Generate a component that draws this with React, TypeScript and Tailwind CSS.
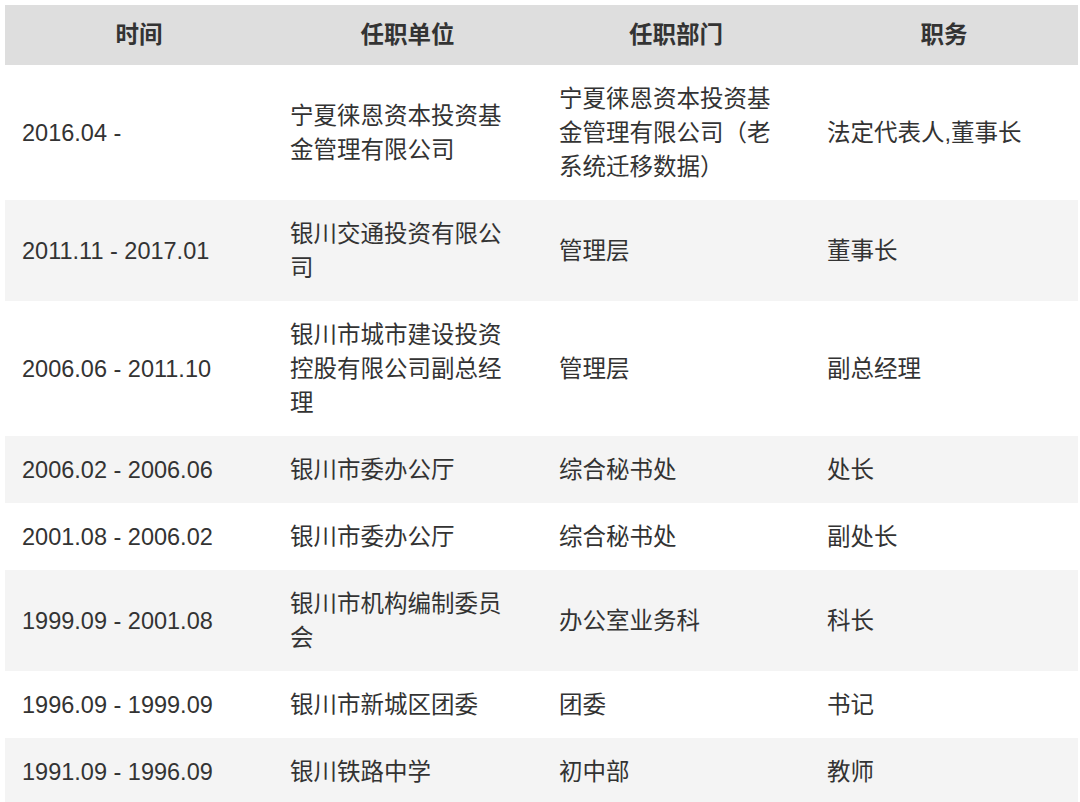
import React from "react";

type Row = { time: string; unit: string[]; dept: string[]; title: string };

const rows: Row[] = [
  {
    time: "2016.04 -",
    unit: ["宁夏徕恩资本投资基", "金管理有限公司"],
    dept: ["宁夏徕恩资本投资基", "金管理有限公司（老", "系统迁移数据）"],
    title: "法定代表人,董事长",
  },
  { time: "2011.11 - 2017.01", unit: ["银川交通投资有限公", "司"], dept: ["管理层"], title: "董事长" },
  {
    time: "2006.06 - 2011.10",
    unit: ["银川市城市建设投资", "控股有限公司副总经", "理"],
    dept: ["管理层"],
    title: "副总经理",
  },
  { time: "2006.02 - 2006.06", unit: ["银川市委办公厅"], dept: ["综合秘书处"], title: "处长" },
  { time: "2001.08 - 2006.02", unit: ["银川市委办公厅"], dept: ["综合秘书处"], title: "副处长" },
  { time: "1999.09 - 2001.08", unit: ["银川市机构编制委员", "会"], dept: ["办公室业务科"], title: "科长" },
  { time: "1996.09 - 1999.09", unit: ["银川市新城区团委"], dept: ["团委"], title: "书记" },
  { time: "1991.09 - 1996.09", unit: ["银川铁路中学"], dept: ["初中部"], title: "教师" },
];

const Lines = ({ lines }: { lines: string[] }) => (
  <>
    {lines.map((l, i) => (
      <span key={i} className="block whitespace-nowrap">
        {l}
      </span>
    ))}
  </>
);

export default function App() {
  return (
    <div
      className="w-[1080px] h-[802px] overflow-hidden bg-white pt-[5px] pl-[5px] text-[#333333]"
      style={{ fontFamily: '"Liberation Sans", "Noto Sans CJK SC", sans-serif' }}
    >
      <table className="w-[1073px] table-fixed border-collapse text-[23.5px] leading-[34px]">
        <colgroup>
          <col className="w-[268px]" />
          <col className="w-[269px]" />
          <col className="w-[268px]" />
          <col className="w-[268px]" />
        </colgroup>
        <thead>
          <tr className="h-[60px] bg-[#dedede]">
            {["时间", "任职单位", "任职部门", "职务"].map((h) => (
              <th key={h} className="text-center font-bold px-[17px] py-0 align-middle">
                {h}
              </th>
            ))}
          </tr>
        </thead>
        <tbody>
          {rows.map((r, i) => (
            <tr key={i} className={i % 2 === 1 ? "bg-[#f4f4f4]" : "bg-white"}>
              <td className="px-[17px] py-[16.5px] align-middle text-left whitespace-nowrap">{r.time}</td>
              <td className="px-[17px] py-[16.5px] align-middle text-left">
                <Lines lines={r.unit} />
              </td>
              <td className="px-[17px] py-[16.5px] align-middle text-left">
                <Lines lines={r.dept} />
              </td>
              <td className="px-[17px] py-[16.5px] align-middle text-left whitespace-nowrap">{r.title}</td>
            </tr>
          ))}
        </tbody>
      </table>
    </div>
  );
}
